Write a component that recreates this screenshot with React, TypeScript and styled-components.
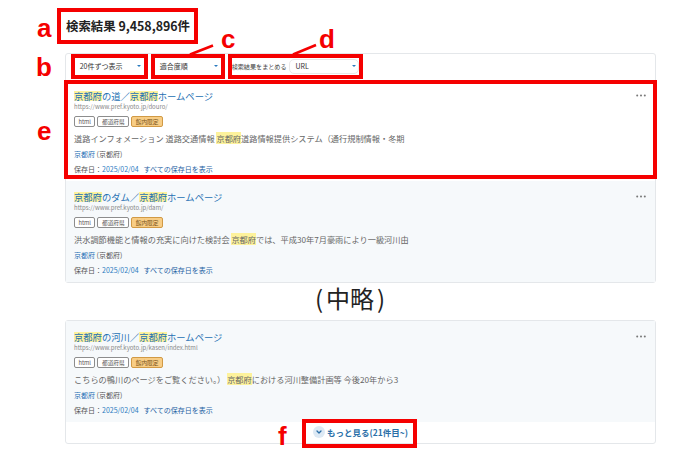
import { createGlobalStyle, styled } from 'styled-components'

const RED = '#f50000'

const GlobalStyle = createGlobalStyle`
  body {
    margin: 0;
    background: #fff;
    font-family: "Noto Sans CJK JP", "Noto Sans", sans-serif;
    color: #333;
  }
`

type Result = {
  title: string
  url: string
  snippetBefore: string
  snippetAfter: string
  tinted?: boolean
  marked?: boolean
}

const results: Result[] = [
  {
    title: 'の道',
    url: 'https://www.pref.kyoto.jp/douro/',
    snippetBefore: '道路インフォメーション 道路交通情報 ',
    snippetAfter: '道路情報提供システム（通行規制情報・冬期',
    marked: true,
  },
  {
    title: 'のダム',
    url: 'https://www.pref.kyoto.jp/dam/',
    snippetBefore: '洪水調節機能と情報の充実に向けた検討会 ',
    snippetAfter: 'では、平成30年7月豪雨により一級河川由',
    tinted: true,
  },
]

const lastResult: Result = {
  title: 'の河川',
  url: 'https://www.pref.kyoto.jp/kasen/index.html',
  snippetBefore: 'こちらの鴨川のページをご覧ください。） ',
  snippetAfter: 'における河川整備計画等 今後20年から3',
  tinted: true,
}

const ResultCard = ({ item }: { item: Result }) => (
  <Card $tinted={item.tinted} $marked={item.marked}>
    {item.marked && <Letter $x={-29} $y={38}>e</Letter>}
    <CardHead>
      <Title>
        <Hit>京都府</Hit>
        {item.title}／<Hit>京都府</Hit>ホームページ
      </Title>
      <Dots width="10" height="3" viewBox="0 0 10 3">
        <circle cx="1.2" cy="1.5" r="1" />
        <circle cx="5" cy="1.5" r="1" />
        <circle cx="8.8" cy="1.5" r="1" />
      </Dots>
    </CardHead>
    <Url>{item.url}</Url>
    <Tags>
      <Tag>html</Tag>
      <Tag>都道府県</Tag>
      <Tag $accent>館内限定</Tag>
    </Tags>
    <Snippet>
      {item.snippetBefore}
      <SnippetHit>京都府</SnippetHit>
      {item.snippetAfter}
    </Snippet>
    <Meta>
      <MetaLink>京都府</MetaLink> (京都府)
    </Meta>
    <Meta>
      保存日：<DateLink>2025/02/04</DateLink>
      <AllDates>すべての保存日を表示</AllDates>
    </Meta>
  </Card>
)

const App = () => {
  return (
    <Page>
      <GlobalStyle />
      <Letter $x={37} $y={15}>a</Letter>
      <Letter $x={36} $y={54}>b</Letter>
      <Letter $x={221} $y={26}>c</Letter>
      <Letter $x={319} $y={26}>d</Letter>
      <Leaders viewBox="0 0 700 459" width="700" height="459">
        <line x1="213" y1="45.5" x2="190" y2="54.5" />
        <line x1="316" y1="45" x2="293" y2="54.5" />
      </Leaders>

      <Heading>検索結果 9,458,896件</Heading>

      <Panel $top={8.4}>
        <Toolbar>
          <Select $w={77}>
            20件ずつ表示
            <Caret />
          </Select>
          <Select $w={74}>
            適合度順
            <Caret />
          </Select>
          <GroupBox>
            <GroupLabel>検索結果をまとめる</GroupLabel>
            <InnerSelect>
              URL
              <Caret />
            </InnerSelect>
          </GroupBox>
        </Toolbar>
        {results.map((r) => (
          <ResultCard key={r.url} item={r} />
        ))}
      </Panel>

      <Omit>
        <Paren>(</Paren>中略<Paren>)</Paren>
      </Omit>

      <Panel>
        <ResultCard item={lastResult} />
        <Footer>
          <MoreButton>
            <Letter $x={-35} $y={-3}>f</Letter>
            <Chevron>
              <svg width="12" height="12" viewBox="0 0 12 12">
                <polyline points="4,5 6,7 8,5" />
              </svg>
            </Chevron>
            もっと見る(21件目~)
          </MoreButton>
        </Footer>
      </Panel>
    </Page>
  )
}

const Page = styled('div')({
  position: 'relative',
  width: '700px',
  height: '459px',
  boxSizing: 'border-box',
  paddingTop: '7.7px',
  overflow: 'hidden',
})

const Letter = styled('span')<{ $x: number; $y: number }>((p) => ({
  position: 'absolute',
  left: `${p.$x}px`,
  top: `${p.$y}px`,
  font: '700 26px/26px "Liberation Sans", Arial, sans-serif',
  color: RED,
  zIndex: 2,
  pointerEvents: 'none',
}))

const Leaders = styled('svg')({
  position: 'absolute',
  left: 0,
  top: 0,
  pointerEvents: 'none',
  zIndex: 2,
  line: {
    stroke: RED,
    strokeWidth: 2.6,
  },
})

const Heading = styled('h1')({
  display: 'flex',
  alignItems: 'center',
  width: 'fit-content',
  height: '36.6px',
  boxSizing: 'border-box',
  margin: '0 0 0 57px',
  padding: '0 4px 0 5px',
  border: `4px solid ${RED}`,
  fontSize: '12.4px',
  fontWeight: 700,
  color: '#222',
  whiteSpace: 'nowrap',
})

const Panel = styled('section')<{ $top?: number }>((p) => ({
  marginLeft: '65px',
  marginTop: `${p.$top ?? 0}px`,
  width: '591px',
  boxSizing: 'border-box',
  border: '1px solid #e4e7ea',
  borderRadius: '3px',
  background: '#fff',
}))

const Toolbar = styled('div')({
  display: 'flex',
  gap: '3px',
  height: '26px',
  padding: '0 0 0 4.7px',
})

const Select = styled('div')<{ $w: number }>((p) => ({
  display: 'flex',
  alignItems: 'center',
  justifyContent: 'space-between',
  width: `${p.$w}px`,
  height: '25px',
  boxSizing: 'border-box',
  border: `4px solid ${RED}`,
  padding: '0 3px 0 5px',
  fontSize: '7px',
  color: '#333',
  background: '#fff',
  whiteSpace: 'nowrap',
}))

const Caret = styled('span')({
  width: 0,
  height: 0,
  borderLeft: '2.3px solid transparent',
  borderRight: '2.3px solid transparent',
  borderTop: '2.8px solid #2b7bbf',
})

const GroupBox = styled('div')({
  display: 'flex',
  alignItems: 'center',
  gap: '2px',
  width: '135px',
  height: '25px',
  boxSizing: 'border-box',
  border: `4px solid ${RED}`,
  background: '#fff',
})

const GroupLabel = styled('span')({
  fontSize: '6.1px',
  color: '#444',
  whiteSpace: 'nowrap',
})

const InnerSelect = styled('div')({
  flex: 1,
  display: 'flex',
  alignItems: 'center',
  justifyContent: 'space-between',
  height: '15px',
  boxSizing: 'border-box',
  border: '1px solid #e8e8e8',
  borderRadius: '5px',
  padding: '0 2px 0 6px',
  fontSize: '7px',
  color: '#333',
})

const Card = styled('article')<{ $tinted?: boolean; $marked?: boolean }>((p) => ({
  position: 'relative',
  height: '101px',
  boxSizing: 'border-box',
  padding: '10px 9px 7px 8px',
  background: p.$tinted ? '#f6f9fb' : '#fff',
  '&::after': p.$marked
    ? {
        content: '""',
        position: 'absolute',
        top: 0,
        left: '-2px',
        right: '-2px',
        bottom: '2px',
        border: `4px solid ${RED}`,
        pointerEvents: 'none',
      }
    : {},
}))

const CardHead = styled('div')({
  display: 'flex',
  alignItems: 'center',
  justifyContent: 'space-between',
  height: '12px',
})

const Title = styled('div')({
  fontSize: '9.3px',
  lineHeight: '12px',
  color: '#2570b3',
  whiteSpace: 'nowrap',
})

const Hit = styled('mark')({
  display: 'inline-block',
  lineHeight: '10.5px',
  background: '#fdf29c',
  color: 'inherit',
})

const Dots = styled('svg')({
  fill: '#777',
})

const Url = styled('div')({
  fontSize: '6px',
  lineHeight: '10px',
  color: '#888',
})

const Tags = styled('div')({
  display: 'flex',
  gap: '2px',
  marginTop: '4.5px',
  height: '11px',
})

const Tag = styled('span')<{ $accent?: boolean }>((p) => ({
  display: 'flex',
  alignItems: 'center',
  height: '11px',
  boxSizing: 'border-box',
  padding: '0 3.5px',
  border: `1px solid ${p.$accent ? '#d19a45' : '#8d8d8d'}`,
  borderRadius: '2px',
  background: p.$accent ? '#f8cd85' : '#fff',
  color: p.$accent ? '#7a5620' : '#555',
  fontSize: '5.7px',
}))

const Snippet = styled('p')({
  margin: '4.5px 0 0',
  fontSize: '8.2px',
  lineHeight: '12px',
  color: '#666',
  whiteSpace: 'nowrap',
})

const SnippetHit = styled('mark')({
  background: '#fdf29c',
  color: 'inherit',
})

const Meta = styled('div')({
  marginTop: '5px',
  fontSize: '7px',
  lineHeight: '10px',
  color: '#555',
  whiteSpace: 'nowrap',
})

const MetaLink = styled('span')({
  color: '#2570b3',
})

const DateLink = styled('span')({
  color: '#2b7bbf',
})

const AllDates = styled('span')({
  marginLeft: '5px',
  color: '#1f62a4',
})

const Omit = styled('div')({
  height: '37px',
  lineHeight: '30px',
  textAlign: 'center',
  fontSize: '24px',
  color: '#222',
})

const Paren = styled('span')({
  margin: '0 3px',
})

const Footer = styled('div')({
  display: 'flex',
  alignItems: 'center',
  justifyContent: 'center',
  height: '21px',
})

const MoreButton = styled('div')({
  position: 'relative',
  display: 'flex',
  alignItems: 'center',
  gap: '2px',
  height: '12px',
  fontSize: '8.5px',
  fontWeight: 700,
  color: '#2a6fa8',
  whiteSpace: 'nowrap',
  '&::after': {
    content: '""',
    position: 'absolute',
    top: '-7px',
    bottom: '-10px',
    left: '-11px',
    right: '-9px',
    border: `4px solid ${RED}`,
    pointerEvents: 'none',
  },
})

const Chevron = styled('span')({
  display: 'flex',
  width: '12px',
  height: '12px',
  borderRadius: '50%',
  background: '#dde9f4',
  polyline: {
    fill: 'none',
    stroke: '#2a6fa8',
    strokeWidth: 1.3,
    strokeLinecap: 'round',
    strokeLinejoin: 'round',
  },
})

export default App
